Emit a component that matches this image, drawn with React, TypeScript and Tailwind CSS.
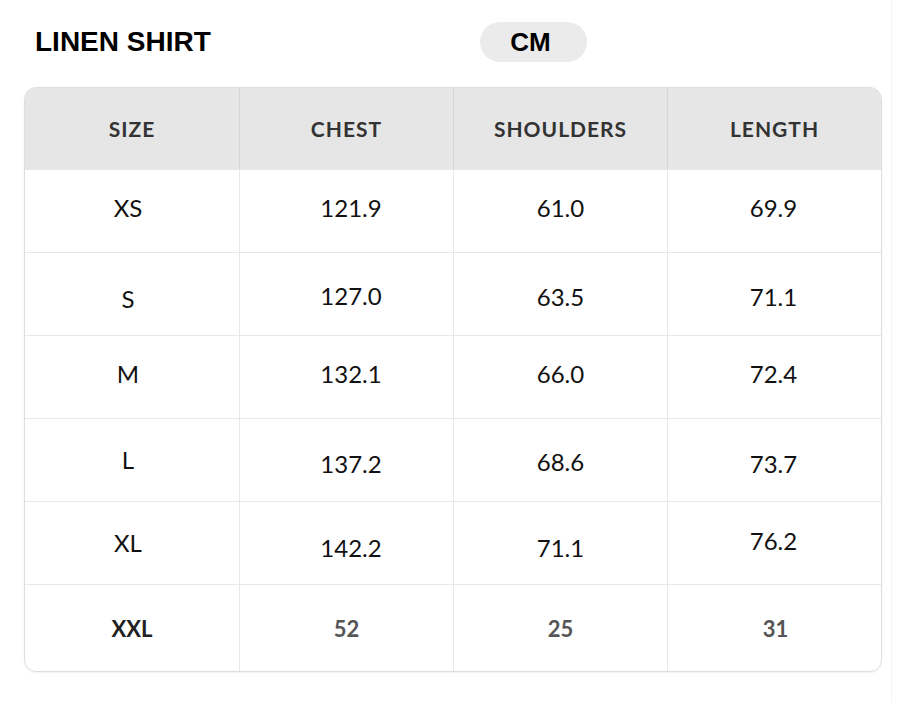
import React from 'react';

// pad classes nudge a value up/down a few px, as in the source image
type Cell = { v: string; pad?: string };

const rows: Cell[][] = [
    [{ v: 'XS', pad: 'pb-[7px]' }, { v: '121.9', pad: 'pb-[7px]' }, { v: '61.0', pad: 'pb-[6px]' }, { v: '69.9', pad: 'pb-[6px]' }],
    [{ v: 'S', pad: 'pt-[9px]' }, { v: '127.0', pad: 'pt-[4px]' }, { v: '63.5', pad: 'pt-[6px]' }, { v: '71.1', pad: 'pt-[6px]' }],
    [{ v: 'M', pad: 'pb-[6px]' }, { v: '132.1', pad: 'pb-[6px]' }, { v: '66.0', pad: 'pb-[6px]' }, { v: '72.4', pad: 'pb-[6px]' }],
    [{ v: 'L' }, { v: '137.2', pad: 'pt-[8px]' }, { v: '68.6', pad: 'pt-[3px]' }, { v: '73.7', pad: 'pt-[8px]' }],
    [{ v: 'XL' }, { v: '142.2', pad: 'pt-[9px]' }, { v: '71.1', pad: 'pt-[9px]' }, { v: '76.2', pad: 'pb-[4px]' }],
];

const headers = ['SIZE', 'CHEST', 'SHOULDERS', 'LENGTH'];

// first column text sits a little left, second a little right
const colShift = ['pr-[8px]', 'pl-[9px] border-l border-[#e8e8e8]', 'border-l border-[#e8e8e8]', 'pr-[2px] border-l border-[#e8e8e8]'];

export default function App() {
    return (
        <div className="w-[900px] h-[702px] bg-white">
            <div className="w-[892px] h-full border-r border-[#f3f3f3]">
                {/* Title + unit toggle */}
                <div className="flex items-center h-[87px] pb-[3px]">
                    <h1 className="ml-[35px] w-[445px] text-[28px] font-bold text-black font-['Liberation_Sans',Arial,sans-serif] leading-none">
                        LINEN SHIRT
                    </h1>
                    <div className="w-[107px] h-[40px] rounded-full bg-[#ebebeb] flex items-center justify-center pr-[6px]">
                        <span className="text-[26px] font-bold text-black font-['Liberation_Sans',Arial,sans-serif] leading-none">CM</span>
                    </div>
                </div>

                {/* Size table */}
                <div className="ml-[24px] w-[858px] rounded-[12px] border border-[#dedede] overflow-hidden font-['Lato','Open_Sans',sans-serif] shadow-[0_1px_2px_rgba(0,0,0,0.06)]">
                    <div className="grid grid-cols-4 h-[81px] bg-[#e6e6e6]">
                        {headers.map((h, i) => (
                            <div
                                key={h}
                                className={`flex items-center justify-center text-[21px] font-bold tracking-[1px] text-[#333] ${i > 0 ? 'border-l border-[#d6d6d6]' : ''}`}
                            >
                                {h}
                            </div>
                        ))}
                    </div>
                    {rows.map((r, ri) => (
                        <div key={ri} className="grid grid-cols-4 h-[83px] border-t border-[#e8e8e8] text-[24px] text-[#111]">
                            {r.map((c, ci) => (
                                <div key={ci} className={`flex items-center justify-center ${colShift[ci]} ${c.pad || ''}`}>
                                    {c.v}
                                </div>
                            ))}
                        </div>
                    ))}
                    <div className="grid grid-cols-4 h-[87px] border-t border-[#e8e8e8] text-[22px] font-bold">
                        <div className="flex items-center justify-center text-[#222]">XXL</div>
                        <div className="flex items-center justify-center border-l border-[#e8e8e8] text-[#555]">52</div>
                        <div className="flex items-center justify-center border-l border-[#e8e8e8] text-[#555]">25</div>
                        <div className="flex items-center justify-center border-l border-[#e8e8e8] text-[#555] pl-[2px]">31</div>
                    </div>
                </div>
            </div>
        </div>
    );
}
